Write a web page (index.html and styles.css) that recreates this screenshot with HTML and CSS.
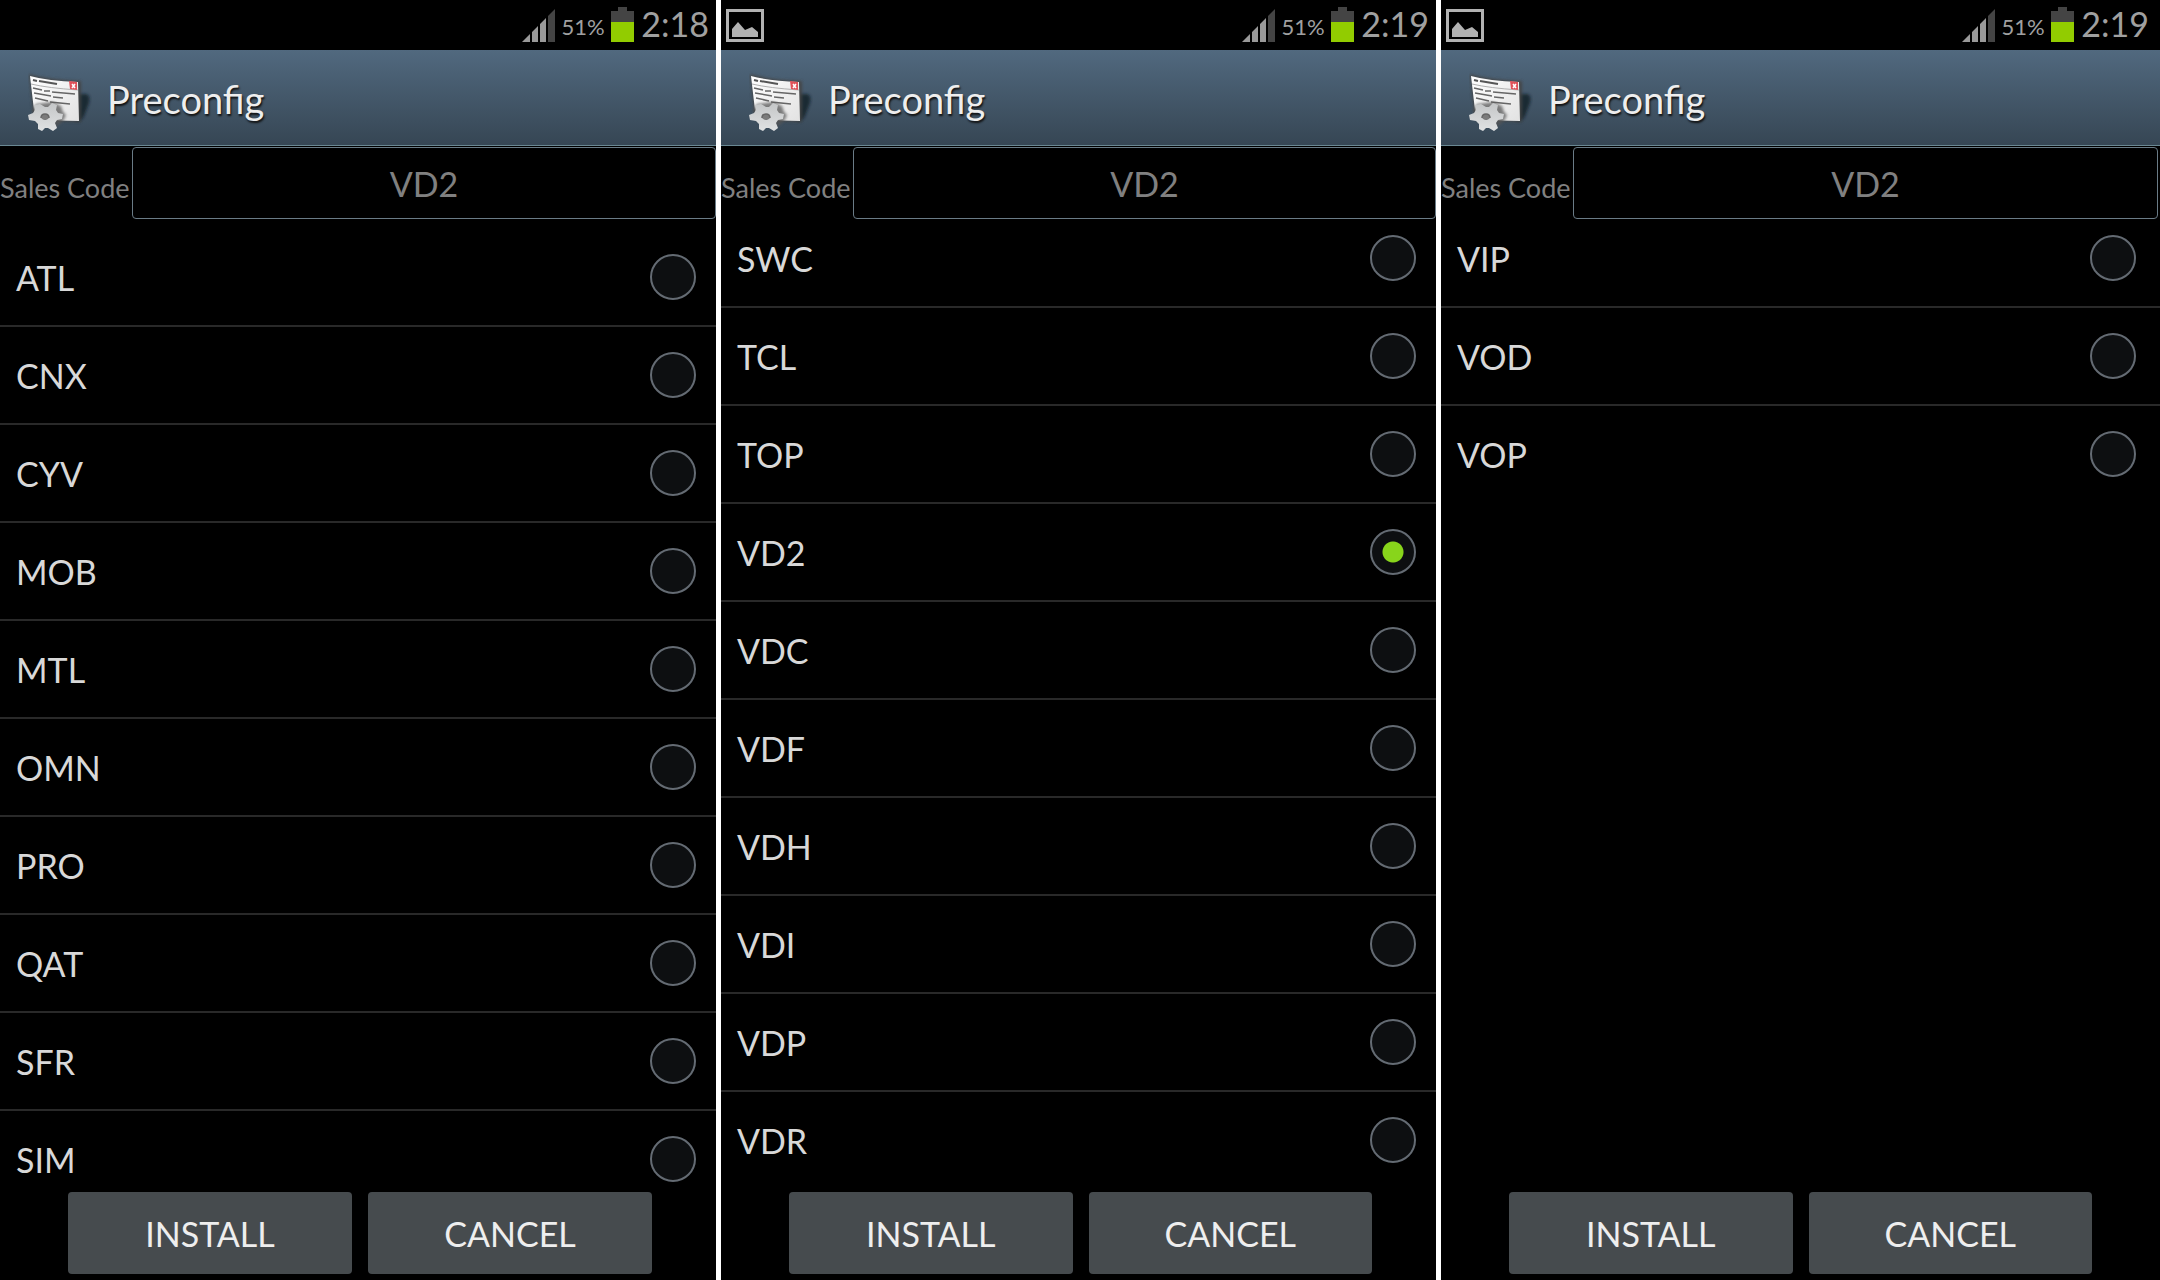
FILE: index.html
```
<!DOCTYPE html>
<html lang="en">
<head>
    <meta charset="UTF-8">
    <meta name="viewport" content="width=device-width, initial-scale=1.0">
    <link rel="stylesheet" href="styles.css">
    <title>Preconfig</title>
</head>
<body>
    <!-- Shared icons -->
    <svg class="sprite" width="0" height="0" aria-hidden="true">
        <defs>
            <linearGradient id="paper" x1="0" y1="0" x2="1" y2="1">
                <stop offset="0" stop-color="#ffffff"/>
                <stop offset="1" stop-color="#e2e2e2"/>
            </linearGradient>
            <linearGradient id="metal" x1="0" y1="0" x2="0" y2="1">
                <stop offset="0" stop-color="#c4c6c7"/>
                <stop offset="1" stop-color="#e0e2e3"/>
            </linearGradient>
            <filter id="soft" x="-50%" y="-50%" width="200%" height="200%">
                <feGaussianBlur stdDeviation="1.5"/>
            </filter>
        </defs>
        <symbol id="icon-app" viewBox="0 0 64 64">
            <path d="M50 24 L58 24 Q63 25 61 33 L56 46 Q53 52 48 51 Z" fill="#111a22" opacity=".75" filter="url(#soft)"/>
            <path d="M1 4 Q20 10 53 11 L53 52 Q30 51 6 49 Z" fill="#454545" opacity=".9" filter="url(#soft)"/>
            <path d="M2 6 Q20 11 50 12 L51 51 Q28 51 7 49 Z" fill="url(#paper)"/>
            <path d="M3 14 Q20 18 50 20" fill="none" stroke="#b0b0b0" stroke-width="1"/>
            <path d="M5 10 L9 11 M11 11 L29 14" stroke="#555" stroke-width="2"/>
            <path d="M5 18 L14 20 M16 21 L22 21 M24 22 L47 24 M6 23 L23 26 M25 27 L35 28 M7 28 L20 31 M22 32 L42 34" stroke="#666" stroke-width="1.5"/>
            <path d="M41 11 L49 12 L49 20 L42 19 Z" fill="#e0525a"/>
            <path d="M44 14 L47 18 M47 14 L44 18" stroke="#fff" stroke-width="1.5"/>
            <path d="M24 32 L33 36 L35 42 L38 45 L35 51 L27 58 L10 52 L4 40 L8 34 Z" fill="#555" opacity=".75" filter="url(#soft)"/>
            <path fill="url(#metal)" fill-rule="evenodd" d="M12 34 L17 37 L20 37 L24 33 L29 35 L28 40 L30 43 L35 44 L34 49 L29 50 L27 53 L29 58 L25 61 L20 58 L17 58 L14 61 L10 59 L10 54 L7 51 L1 50 L0 45 L5 43 L7 40 L6 35 Z M17 44 A4 3 0 1 0 17.100 44 Z"/>
            <path d="M13 48 Q13 44 17 44 Q21 44 21 48" fill="none" stroke="#666" stroke-width="1.500"/>
        </symbol>
        <symbol id="icon-signal" viewBox="0 0 33 33">
            <path d="M0 33 L8 25 V33 Z M10 23 L16 17 V33 H10 Z M18 15 L24 9 V33 H18 Z" fill="#999"/>
            <path d="M26 7 L33 0 V33 H26 Z" fill="#444"/>
        </symbol>
        <symbol id="icon-battery" viewBox="0 0 23 35">
            <path d="M7 0 H16 V4 H23 V15 H0 V4 H7 Z" fill="#444"/>
            <path d="M0 15 H23 V35 H0 Z" fill="#92cc00"/>
        </symbol>
        <symbol id="icon-picture" viewBox="0 0 38 33">
            <path d="M1.500 1.500 H36.500 V31.500 H1.500 Z" fill="none" stroke="#b2b2b2" stroke-width="3"/>
            <path d="M6 28 V20 L12 13 L19 21 L26 18 L32 23 V28 Z" fill="#b2b2b2"/>
        </symbol>
    </svg>

    <main class="screens">
        <section class="phone phone-first">
            <div class="status-bar">
                <svg class="signal" role="img" aria-label="Signal"><use href="#icon-signal"/></svg>
                <span class="percent">51%</span>
                <svg class="battery" role="img" aria-label="Battery"><use href="#icon-battery"/></svg>
                <span class="clock">2:18</span>
            </div>
            <header class="title-bar">
                <svg class="app-icon" aria-hidden="true"><use href="#icon-app"/></svg>
                <h1>Preconfig</h1>
            </header>
            <div class="sales-code">
                <label for="code1">Sales Code</label>
                <input type="text" id="code1" value="VD2" readonly>
            </div>
            <div class="code-list">
                <label class="row">ATL<input type="radio" name="list1"></label>
                <label class="row">CNX<input type="radio" name="list1"></label>
                <label class="row">CYV<input type="radio" name="list1"></label>
                <label class="row">MOB<input type="radio" name="list1"></label>
                <label class="row">MTL<input type="radio" name="list1"></label>
                <label class="row">OMN<input type="radio" name="list1"></label>
                <label class="row">PRO<input type="radio" name="list1"></label>
                <label class="row">QAT<input type="radio" name="list1"></label>
                <label class="row">SFR<input type="radio" name="list1"></label>
                <label class="row">SIM<input type="radio" name="list1"></label>
            </div>
            <footer class="actions">
                <button type="button">INSTALL</button>
                <button type="button">CANCEL</button>
            </footer>
        </section>

        <section class="phone">
            <div class="status-bar">
                <svg class="picture" role="img" aria-label="Screenshot saved"><use href="#icon-picture"/></svg>
                <svg class="signal" role="img" aria-label="Signal"><use href="#icon-signal"/></svg>
                <span class="percent">51%</span>
                <svg class="battery" role="img" aria-label="Battery"><use href="#icon-battery"/></svg>
                <span class="clock">2:19</span>
            </div>
            <header class="title-bar">
                <svg class="app-icon" aria-hidden="true"><use href="#icon-app"/></svg>
                <h1>Preconfig</h1>
            </header>
            <div class="sales-code">
                <label for="code2">Sales Code</label>
                <input type="text" id="code2" value="VD2" readonly>
            </div>
            <div class="code-list">
                <label class="row">SWC<input type="radio" name="list2"></label>
                <label class="row">TCL<input type="radio" name="list2"></label>
                <label class="row">TOP<input type="radio" name="list2"></label>
                <label class="row">VD2<input type="radio" name="list2" checked></label>
                <label class="row">VDC<input type="radio" name="list2"></label>
                <label class="row">VDF<input type="radio" name="list2"></label>
                <label class="row">VDH<input type="radio" name="list2"></label>
                <label class="row">VDI<input type="radio" name="list2"></label>
                <label class="row">VDP<input type="radio" name="list2"></label>
                <label class="row">VDR<input type="radio" name="list2"></label>
            </div>
            <footer class="actions">
                <button type="button">INSTALL</button>
                <button type="button">CANCEL</button>
            </footer>
        </section>

        <section class="phone phone-last">
            <div class="status-bar">
                <svg class="picture" role="img" aria-label="Screenshot saved"><use href="#icon-picture"/></svg>
                <svg class="signal" role="img" aria-label="Signal"><use href="#icon-signal"/></svg>
                <span class="percent">51%</span>
                <svg class="battery" role="img" aria-label="Battery"><use href="#icon-battery"/></svg>
                <span class="clock">2:19</span>
            </div>
            <header class="title-bar">
                <svg class="app-icon" aria-hidden="true"><use href="#icon-app"/></svg>
                <h1>Preconfig</h1>
            </header>
            <div class="sales-code">
                <label for="code3">Sales Code</label>
                <input type="text" id="code3" value="VD2" readonly>
            </div>
            <div class="code-list">
                <label class="row">VIP<input type="radio" name="list3"></label>
                <label class="row">VOD<input type="radio" name="list3"></label>
                <label class="row">VOP<input type="radio" name="list3"></label>
            </div>
            <footer class="actions">
                <button type="button">INSTALL</button>
                <button type="button">CANCEL</button>
            </footer>
        </section>
    </main>
</body>
</html>
```
FILE: styles.css
```
* {
    box-sizing: border-box;
}

body {
    margin: 0;
    background-color: #fff;
    font-family: Lato, "Open Sans", sans-serif;
    font-size: 34px;
    color: #d8d8d8;
}

.sprite {
    position: absolute;
}

.screens {
    display: grid;
    grid-template-columns: 716fr 715fr 719fr;
    gap: 5px;
    height: 100vh;
}

.phone {
    --edge: 0px;
    display: flex;
    flex-direction: column;
    min-width: 0;
    min-height: 0;
    background-color: #000;
}

.phone-last {
    --edge: 4px;
}

/* Status bar */
.status-bar {
    flex: none;
    display: flex;
    align-items: flex-end;
    justify-content: flex-end;
    height: 50px;
    padding: 0 calc(7px + var(--edge)) 8px 5px;
    color: #a0a0a0;
}

.picture {
    width: 38px;
    height: 33px;
    margin-right: auto;
}

.signal {
    width: 33px;
    height: 33px;
}

.percent {
    width: 56px;
    font-size: 22px;
    line-height: 30px;
    text-align: center;
}

.battery {
    width: 23px;
    height: 35px;
}

.clock {
    width: 75px;
    font-size: 34px;
    line-height: 36px;
    text-align: right;
}

/* Title bar */
.title-bar {
    flex: none;
    display: flex;
    align-items: center;
    height: 96px;
    padding-left: 28px;
    background: linear-gradient(#51697f, #364654);
    border-bottom: 1px solid #6a8893;
}

.app-icon {
    width: 64px;
    height: 64px;
    margin: 8px 15px 0 0;
}

h1 {
    margin: 0;
    padding-top: 2px;
    font-size: 38px;
    font-weight: normal;
    color: #eee;
    text-shadow: 1px 2px 2px #111;
}

/* Sales code field */
.sales-code {
    flex: none;
    display: flex;
    align-items: center;
    height: 64px;
    margin-top: 5px;
    padding-right: calc(var(--edge) / 2);
    font-size: 27px;
    color: #808080;
}

.sales-code label {
    flex: none;
    width: 132px;
    padding-top: 8px;
    white-space: nowrap;
}

.sales-code input {
    flex: 1;
    min-width: 0;
    height: 72px;
    padding: 0;
    background: none;
    border: 1px solid #6a7b86;
    border-radius: 4px;
    font: inherit;
    font-size: 34px;
    color: #808080;
    text-align: center;
    outline: none;
}

/* List of codes */
.code-list {
    flex: 1;
    min-height: 0;
    margin-top: -5px;
    overflow: hidden;
}

.phone-first .code-list {
    padding-top: 19px;
}

.row {
    display: flex;
    align-items: center;
    justify-content: space-between;
    height: 98px;
    padding: 0 calc(20px + var(--edge)) 0 16px;
    border-bottom: 2px solid #292929;
}

.row:last-child {
    border-bottom-color: transparent;
}

.row input {
    appearance: none;
    width: 46px;
    height: 46px;
    margin: 0;
    background-color: #0d0f11;
    border: 2px solid #646b73;
    border-radius: 50%;
}

.row input:checked {
    background-image: radial-gradient(circle, #88d51b 10px, transparent 11px);
}

/* Buttons */
.actions {
    flex: none;
    display: flex;
    gap: 16px;
    height: 88px;
    padding: 0 calc(64px + var(--edge)) 6px 68px;
}

.actions button {
    flex: 1;
    padding: 0;
    background-color: #464b4e;
    border: none;
    border-radius: 4px;
    font: inherit;
    color: #eee;
}
```
